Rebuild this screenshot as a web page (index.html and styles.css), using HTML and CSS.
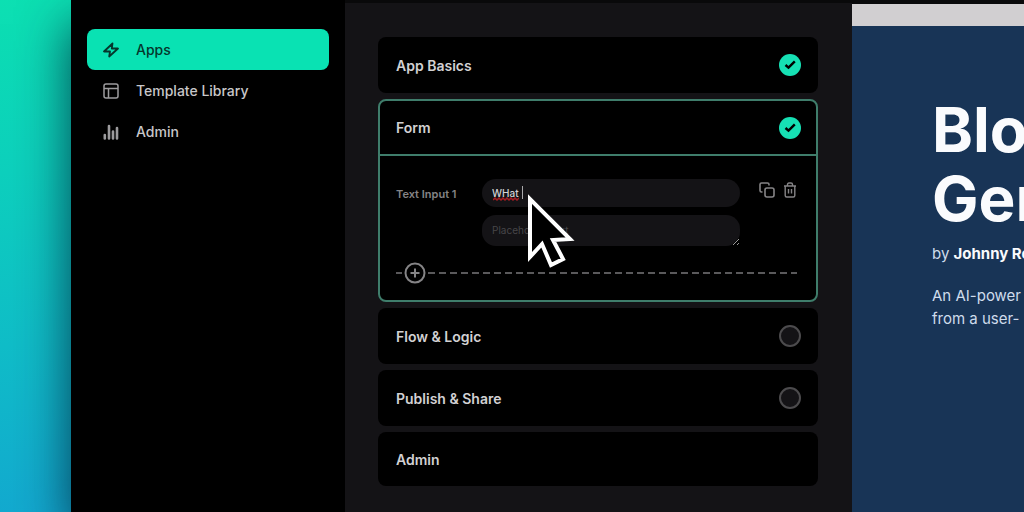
FILE: index.html
```html
<!DOCTYPE html>
<html lang="en">
<head>
    <meta charset="UTF-8">
    <meta name="viewport" content="width=device-width, initial-scale=1.0">
    <title>Form</title>
    <link rel="stylesheet" href="styles.css">
</head>

<body>
    <div class="window">
        <nav class="sidebar">
            <a href="#apps" class="nav-link active">
                <svg width="16" height="16" viewBox="0 0 16 16" fill="none" stroke="currentColor" stroke-width="1.8" stroke-linejoin="round">
                    <path d="M9.5 1.5 1 9.5H7L6.2 14.500 15 6.500H8.800Z"/>
                </svg>
                Apps
            </a>
            <a href="#templates" class="nav-link">
                <svg width="16" height="16" viewBox="0 0 16 16" fill="none" stroke="currentColor" stroke-width="1.5">
                    <rect x="1" y="1" width="14" height="14" rx="2"/>
                    <path d="M1 5.5H15M5.5 5.5V15"/>
                </svg>
                Template Library
            </a>
            <a href="#admin" class="nav-link">
                <svg width="16" height="16" viewBox="0 0 16 16" fill="none" stroke="currentColor" stroke-width="2.6" stroke-linecap="round">
                    <path d="M1.8 11V14.5M6 2V14.5M10 7.5V14.5M14 4V14.5"/>
                </svg>
                Admin
            </a>
        </nav>

        <main class="builder">
            <section class="card">
                <button class="card-head">
                    App Basics
                    <svg width="24" height="24" viewBox="0 0 24 24">
                        <circle cx="12" cy="12" r="11" fill="#16e0b4"/>
                        <path d="M7.5 12 10.500 14.700 16.800 8.300" fill="none" stroke="#000" stroke-width="2.4"/>
                    </svg>
                </button>
            </section>

            <section class="card open">
                <button class="card-head">
                    Form
                    <svg width="24" height="24" viewBox="0 0 24 24">
                        <circle cx="12" cy="12" r="11" fill="#16e0b4"/>
                        <path d="M7.5 12 10.500 14.700 16.800 8.300" fill="none" stroke="#000" stroke-width="2.4"/>
                    </svg>
                </button>
                <div class="card-body">
                    <div class="field">
                        <label for="question">Text Input 1</label>
                        <div class="field-inputs">
                            <div class="typing">
                                <input type="text" id="question" value="WHat" spellcheck="false">
                                <svg class="squiggle" width="26" height="4" viewBox="0 0 26 4" fill="none" stroke="#a51d22" stroke-width="1.5">
                                    <path d="M0 3 2 1 4 3 6 1 8 3 10 1 12 3 14 1 16 3 18 1 20 3 22 1 24 3 26 1"/>
                                </svg>
                                <span class="caret"></span>
                            </div>
                            <textarea rows="1" placeholder="Placeholder text" aria-label="Placeholder text"></textarea>
                            <!-- Mouse pointer -->
                            <svg class="pointer" width="48" height="76" viewBox="0 0 48 76">
                                <path d="M3 6V64L15 51 24 72 36 66 26 47 43 46Z" fill="#000" stroke="#fff" stroke-width="4"/>
                            </svg>
                        </div>
                        <div class="field-actions">
                            <button class="icon-button" aria-label="Duplicate">
                                <svg width="16" height="16" viewBox="0 0 16 16" fill="none" stroke="currentColor" stroke-width="1.6" stroke-linejoin="round">
                                    <rect x="6" y="6" width="9" height="9" rx="2"/>
                                    <path d="M3.5 10H2.5Q1 10 1 8.5V2.5Q1 1 2.5 1H8.5Q10 1 10 2.5V3.5"/>
                                </svg>
                            </button>
                            <button class="icon-button" aria-label="Delete">
                                <svg width="14" height="16" viewBox="0 0 14 16" fill="none" stroke="currentColor" stroke-width="1.4" stroke-linejoin="round">
                                    <path d="M1 4H13M4.5 4V2.5Q4.5 1 6 1H8Q9.5 1 9.5 2.5V4M2.2 4V13.5Q2.2 15 3.7 15H10.3Q11.8 15 11.8 13.5V4M5.5 7V11.5M8.5 7V11.5"/>
                                </svg>
                            </button>
                        </div>
                    </div>
                    <div class="add-row">
                        <span class="dash lead"></span>
                        <button class="icon-button" aria-label="Add field">
                            <svg width="22" height="22" viewBox="0 0 22 22" fill="none" stroke="currentColor" stroke-width="2">
                                <circle cx="11" cy="11" r="9.5"/>
                                <path d="M11 6.5V15.5M6.5 11H15.5"/>
                            </svg>
                        </button>
                        <span class="dash"></span>
                    </div>
                </div>
            </section>

            <section class="card">
                <button class="card-head">
                    Flow &amp; Logic
                    <svg width="24" height="24" viewBox="0 0 24 24">
                        <circle cx="12" cy="12" r="10" fill="#141316" stroke="#4c4b4d" stroke-width="2"/>
                    </svg>
                </button>
            </section>

            <section class="card">
                <button class="card-head">
                    Publish &amp; Share
                    <svg width="24" height="24" viewBox="0 0 24 24">
                        <circle cx="12" cy="12" r="10" fill="#141316" stroke="#4c4b4d" stroke-width="2"/>
                    </svg>
                </button>
            </section>

            <section class="card">
                <button class="card-head short">Admin</button>
            </section>
        </main>

        <aside class="preview">
            <div class="preview-bar"></div>
            <h1>Blo<br>Gen</h1>
            <p class="author">by <b>Johnny Ro</b></p>
            <p class="about">An AI-power<br>from a user-</p>
        </aside>
    </div>
</body>
</html>
```

FILE: styles.css
```css
* {
    box-sizing: border-box;
}

body {
    margin: 0;
    padding-left: 71px;
    overflow: hidden;
    font-family: Inter, "Liberation Sans", sans-serif;
    font-size: 14px;
    color: #d2d1d3;
    background: linear-gradient(170deg, #0ce0b2 0%, #0dd0bd 25%, #10bdc8 50%, #13a9d0 75%, #149bd8 100%);
}

button {
    font: inherit;
    color: inherit;
    background: none;
    border: none;
    cursor: pointer;
}

svg {
    display: block;
    flex: none;
}

.window {
    display: grid;
    grid-template-columns: 274px minmax(0, 1fr) 172px;
    min-height: 100vh;
    background-color: #000;
    box-shadow: 0 24px 48px rgba(0, 30, 50, 0.8);
}

/* Sidebar */
.sidebar {
    display: flex;
    flex-direction: column;
    padding: 29px 16px;
}

.nav-link {
    display: flex;
    align-items: center;
    gap: 17px;
    height: 41px;
    padding: 0 16px;
    border-radius: 8px;
    font-weight: 500;
    color: #c8c7c9;
    text-decoration: none;
}

.nav-link svg {
    color: #9c9b9d;
}

.nav-link.active,
.nav-link.active svg {
    color: #05372c;
}

.nav-link.active {
    background-color: #09e2b3;
}

/* Accordion */
.builder {
    display: flex;
    flex-direction: column;
    gap: 6px;
    padding: 34px 34px 24px 33px;
    border-top: 3px solid #09090a;
    background-color: #141316;
}

.card {
    background-color: #000;
    border-radius: 8px;
}

.card.open {
    border: 2px solid #3f7d6b;
}

.card-head {
    display: flex;
    align-items: center;
    justify-content: space-between;
    width: 100%;
    height: 56px;
    padding: 0 16px 0 18px;
    font-weight: 600;
}

.card-head.short {
    height: 54px;
}

.card.open .card-head {
    height: 55px;
    padding: 0 14px 0 16px;
    border-bottom: 2px solid #3f7d6b;
}

.card-body {
    padding: 23px 19px 16px 16px;
}

.field {
    display: flex;
}

.field label {
    width: 86px;
    padding-top: 8px;
    font-size: 11px;
    font-weight: 600;
    line-height: 14px;
    color: #858486;
}

.field-inputs {
    position: relative;
    display: flex;
    flex: 1;
    flex-direction: column;
    gap: 8px;
}

.typing {
    position: relative;
}

input,
textarea {
    display: block;
    width: 100%;
    padding: 0 10px;
    border: none;
    outline: none;
    border-radius: 14px;
    font: inherit;
    font-size: 10px;
    color: #d2d1d3;
    background-color: #141316;
    color-scheme: dark;
}

input {
    height: 28px;
    font-weight: 500;
}

textarea {
    height: 31px;
    line-height: 31px;
    overflow: hidden;
}

textarea::placeholder {
    color: #474649;
}

.squiggle {
    position: absolute;
    left: 11px;
    top: 18px;
}

.caret {
    position: absolute;
    left: 40px;
    top: 7px;
    width: 1px;
    height: 13px;
    background-color: #aaa9ab;
}

.pointer {
    position: absolute;
    left: 45px;
    top: 14px;
}

.field-actions {
    display: flex;
    align-items: flex-start;
    gap: 8px;
    padding: 3px 0 0 19px;
}

.icon-button {
    padding: 0;
    color: #858486;
}

.add-row {
    display: flex;
    align-items: center;
    gap: 2px;
    margin-top: 16px;
}

.dash {
    flex: 1;
    height: 2px;
    background: repeating-linear-gradient(90deg, #5a595b 0 7px, transparent 7px 11px);
}

.dash.lead {
    flex: none;
    width: 6px;
}

/* App preview */
.preview {
    overflow: hidden;
    border-top: 4px solid #09090a;
    padding-left: 80px;
    color: #cfdcec;
    background-color: #183456;
    white-space: nowrap;
}

.preview-bar {
    height: 22px;
    margin: 0 0 69px -80px;
    background-color: #d1cfd1;
}

h1 {
    margin: 0;
    font-size: 62px;
    font-weight: 700;
    line-height: 69px;
    color: #fafbfd;
}

.author,
.about {
    margin: 0;
    font-size: 15px;
    line-height: 23px;
}

.author {
    margin: 9px 0 19px;
}

.author b {
    font-weight: 700;
    color: #fafbfd;
}
```
